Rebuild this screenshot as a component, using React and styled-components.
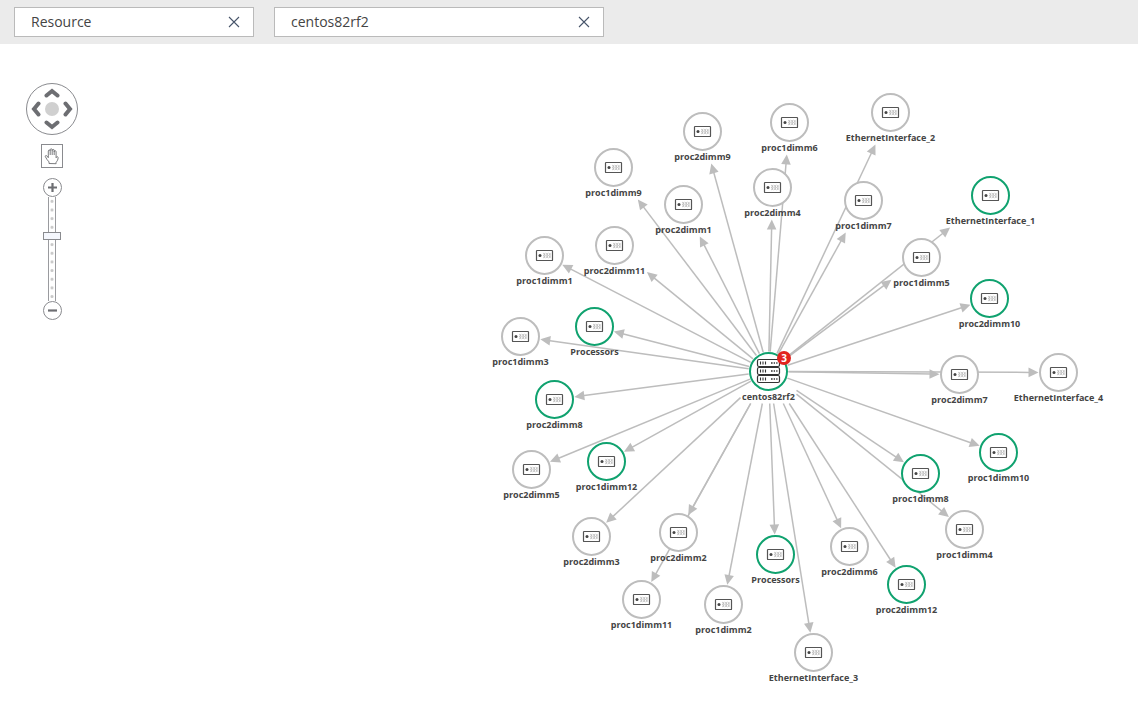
import React, { useState } from "react";
import styled, { createGlobalStyle } from "styled-components";

const GlobalStyle = createGlobalStyle`
  *, *::before, *::after { box-sizing: border-box; }
  body {
    margin: 0;
    background: #fff;
    color: #444;
    font-family: "Open Sans", "Noto Sans", sans-serif;
  }
  button, input { font-family: inherit; color: inherit; }
`;

const Page = styled.div`
  display: flex;
  flex-direction: column;
  min-height: 100vh;
`;

const FilterBar = styled.header`
  display: flex;
  gap: 20px;
  padding: 7px 14px;
  background: #ebebeb;
`;

const FilterBox = styled.div`
  display: flex;
  align-items: center;
  flex: 0 1 ${(p) => p.$width}px;
  min-width: 0;
  height: 30px;
  border: 1px solid #bababa;
  background: #fff;
`;

const FilterInput = styled.input`
  flex: 1;
  min-width: 0;
  padding: 0 16px;
  border: 0;
  outline: 0;
  background: transparent;
  font-size: 14px;
  line-height: 20px;
`;

const ClearButton = styled.button`
  display: flex;
  align-items: center;
  justify-content: center;
  flex: none;
  width: 38px;
  height: 28px;
  padding: 0;
  border: 0;
  background: transparent;
`;

const Workspace = styled.main`
  position: relative;
  flex: 1;
  overflow: hidden;
`;

const Canvas = styled.div`
  position: relative;
  height: 660px;
`;

const EdgeLayer = styled.svg`
  position: absolute;
  inset: 0;
  width: 100%;
  height: 100%;
  overflow: visible;
`;

const Node = styled.div`
  position: absolute;
  left: ${(p) => p.$x - 60}px;
  top: ${(p) => p.$y - 19}px;
  display: flex;
  flex-direction: column;
  align-items: center;
  width: 121px;
`;

const NodeDisc = styled.div`
  position: relative;
  display: flex;
  align-items: center;
  justify-content: center;
  width: 39px;
  height: 39px;
  border: 2px solid ${(p) => (p.$active ? "#10a26f" : "#bdbdbd")};
  border-radius: 50%;
  background: #fff;
`;

const NodeLabel = styled.span`
  font-size: 9px;
  font-weight: 700;
  line-height: 12px;
  white-space: nowrap;
`;

const Badge = styled.span`
  position: absolute;
  top: -3px;
  right: -5px;
  width: 14px;
  height: 14px;
  border-radius: 50%;
  background: #e2231f;
  color: #fff;
  font-size: 10px;
  font-weight: 700;
  line-height: 14px;
  text-align: center;
`;

const Controls = styled.aside`
  position: absolute;
  top: 39px;
  left: 26px;
  display: flex;
  flex-direction: column;
  align-items: center;
  width: 52px;
`;

const PanPad = styled.div`
  display: grid;
  grid-template-columns: repeat(3, 16px);
  grid-template-rows: repeat(3, 16px);
  place-content: center;
  place-items: center;
  width: 52px;
  height: 52px;
  border: 1px solid #8a8b8f;
  border-radius: 50%;
`;

const PanButton = styled.button`
  display: flex;
  grid-area: ${(p) => p.$area};
  padding: 0;
  border: 0;
  background: transparent;

  svg { transform: rotate(${(p) => p.$turn}deg); }
`;

const CenterButton = styled.button`
  grid-area: 2 / 2;
  width: 14px;
  height: 14px;
  padding: 0;
  border: 0;
  border-radius: 50%;
  background: #d0d0d0;
`;

const HandButton = styled.button`
  display: flex;
  align-items: center;
  justify-content: center;
  width: 22px;
  height: 24px;
  margin: 9px 0 10px;
  padding: 0;
  border: 1px solid #8a8b8f;
  background: #fff;
`;

const ZoomButton = styled.button`
  display: flex;
  align-items: center;
  justify-content: center;
  width: 19px;
  height: 19px;
  padding: 0;
  border: 1px solid #8a8b8f;
  border-radius: 50%;
  background: #fff;
`;

const ZoomSlider = styled.input`
  appearance: none;
  writing-mode: vertical-lr;
  direction: rtl;
  width: 18px;
  height: 104px;
  margin: 0;
  background: transparent;

  &::-webkit-slider-runnable-track {
    width: 8px;
    height: 104px;
    border: solid #9a9b9f;
    border-width: 0 1px;
    background: radial-gradient(circle, #c8c8c8 1px, transparent 2px) center top / 6px calc(100% / 12);
  }

  &::-webkit-slider-thumb {
    appearance: none;
    width: 18px;
    height: 8px;
    margin-left: -6px;
    border: 1px solid #8a8b8f;
    background: #f5f7fd;
  }
`;

const HUB = { x: 768, y: 327, label: "centos82rf2" };
const HUB_LABEL_HALF = 28;

const NODES = [
  { label: "proc2dimm9", x: 702, y: 87 },
  { label: "proc1dimm6", x: 789, y: 78 },
  { label: "EthernetInterface_2", x: 890, y: 68 },
  { label: "proc1dimm9", x: 613, y: 123 },
  { label: "proc2dimm1", x: 683, y: 160 },
  { label: "proc2dimm4", x: 772, y: 143 },
  { label: "proc1dimm7", x: 863, y: 156 },
  { label: "EthernetInterface_1", x: 990, y: 151, active: true },
  { label: "proc1dimm1", x: 544, y: 211 },
  { label: "proc2dimm11", x: 614, y: 201 },
  { label: "proc1dimm5", x: 921, y: 213 },
  { label: "proc2dimm10", x: 989, y: 254, active: true },
  { label: "proc1dimm3", x: 520, y: 292 },
  { label: "Processors", x: 594, y: 282, active: true },
  { label: "proc2dimm8", x: 554, y: 355, active: true },
  { label: "proc2dimm7", x: 959, y: 330 },
  { label: "EthernetInterface_4", x: 1058, y: 328 },
  { label: "proc2dimm5", x: 531, y: 425 },
  { label: "proc1dimm12", x: 606, y: 417, active: true },
  { label: "proc1dimm8", x: 920, y: 429, active: true },
  { label: "proc1dimm10", x: 998, y: 408, active: true },
  { label: "proc2dimm3", x: 591, y: 492 },
  { label: "proc2dimm2", x: 678, y: 488 },
  { label: "Processors", x: 775, y: 510, active: true },
  { label: "proc2dimm6", x: 849, y: 502 },
  { label: "proc1dimm4", x: 964, y: 485 },
  { label: "proc1dimm11", x: 641, y: 555 },
  { label: "proc1dimm2", x: 723, y: 560 },
  { label: "proc2dimm12", x: 906, y: 540, active: true },
  { label: "EthernetInterface_3", x: 813, y: 608 },
];

// Distance from a node's centre, along (ux, uy), at which a line clears both its disc and its label.
function clearance(half, ux, uy) {
  const radius = 20;
  if (uy <= 0) return radius;
  const toSide = ux === 0 ? Infinity : half / Math.abs(ux);
  const exit = Math.min(toSide, 32 / uy);
  return exit * uy > 18 ? Math.max(radius, exit) : radius;
}

function Edge({ to }) {
  const dx = to.x - HUB.x;
  const dy = to.y - HUB.y;
  const len = Math.hypot(dx, dy);
  const ux = dx / len;
  const uy = dy / len;
  const start = clearance(HUB_LABEL_HALF, ux, uy);
  const end = len - clearance(to.label.length * 2.4 + 6, -ux, -uy);
  const at = (d, side = 0) => [HUB.x + 0.5 + ux * d - uy * side, HUB.y + 0.5 + uy * d + ux * side];
  const [x1, y1] = at(start);
  const [x2, y2] = at(end - 8);
  return (
    <g>
      <line x1={x1} y1={y1} x2={x2} y2={y2} stroke="#bdbdbd" strokeWidth="1.5" />
      <polygon points={[at(end), at(end - 10, 4.8), at(end - 10, -4.8)].join(" ")} fill="#bdbdbd" />
    </g>
  );
}

function DeviceIcon() {
  return (
    <svg width="19" height="13" viewBox="0 0 19 13" fill="none" aria-hidden="true">
      <rect x="1.5" y="1.5" width="16" height="10" rx=".6" stroke="#555" strokeWidth="1.2" />
      <circle cx="5" cy="6.5" r="1.5" fill="#444" />
      <path
        d="M8 4l1.7 1.3L8 6.5l1.7 1.3L8 9M10.7 4l1.7 1.3-1.7 1.2 1.7 1.3L10.7 9M13.4 4l1.7 1.3-1.7 1.2 1.7 1.3L13.4 9M9.7 4v5M12.4 4v5M15.1 4v5"
        stroke="#aaa"
        strokeWidth=".6"
      />
    </svg>
  );
}

function ServerIcon() {
  return (
    <svg width="25" height="27" viewBox="0 0 25 27" fill="none" stroke="#333" aria-hidden="true">
      {[1.5, 9.5, 17.5].map((y) => (
        <g key={y}>
          <rect x="1.5" y={y} width="22" height="7" rx="1.5" strokeWidth="1.2" />
          <path d={`M4.5 ${y + 2}v3M7 ${y + 2}v3M9.5 ${y + 2}v3`} strokeWidth="1.1" />
          <path d={`M15 ${y + 3.5}h1.6M17.7 ${y + 3.5}h1.3M20.2 ${y + 3.5}h1.3`} strokeWidth="1.3" />
        </g>
      ))}
    </svg>
  );
}

function Chevron() {
  return (
    <svg width="16" height="10" viewBox="0 0 16 10" fill="none" aria-hidden="true">
      <path d="M2.5 7.5L8 3l5.5 4.5" stroke="#6d6e72" strokeWidth="4" strokeLinecap="round" />
    </svg>
  );
}

function Filter({ name, initial, width }) {
  const [value, setValue] = useState(initial);
  return (
    <FilterBox $width={width}>
      <FilterInput aria-label={name} value={value} onChange={(e) => setValue(e.target.value)} />
      <ClearButton aria-label={`Clear ${name}`} onClick={() => setValue("")}>
        <svg width="12" height="12" viewBox="0 0 12 12" aria-hidden="true">
          <path d="M1 1l10 10M11 1L1 11" stroke="#48556a" strokeWidth="1.1" />
        </svg>
      </ClearButton>
    </FilterBox>
  );
}

export default function App() {
  const [zoom, setZoom] = useState(64);
  return (
    <Page>
      <GlobalStyle />
      <FilterBar>
        <Filter name="Category" initial="Resource" width={240} />
        <Filter name="Resource name" initial="centos82rf2" width={330} />
      </FilterBar>
      <Workspace>
        <Canvas>
          <EdgeLayer aria-hidden="true">
            {NODES.map((n) => (
              <Edge key={`${n.x}-${n.y}`} to={n} />
            ))}
          </EdgeLayer>
          {NODES.map((n) => (
            <Node key={`${n.x}-${n.y}`} $x={n.x} $y={n.y}>
              <NodeDisc $active={n.active}>
                <DeviceIcon />
              </NodeDisc>
              <NodeLabel>{n.label}</NodeLabel>
            </Node>
          ))}
          <Node $x={HUB.x} $y={HUB.y}>
            <NodeDisc $active>
              <ServerIcon />
              <Badge>3</Badge>
            </NodeDisc>
            <NodeLabel>{HUB.label}</NodeLabel>
          </Node>
        </Canvas>
        <Controls>
          <PanPad>
            <PanButton aria-label="Pan up" $area="1 / 2" $turn={0}><Chevron /></PanButton>
            <PanButton aria-label="Pan left" $area="2 / 1" $turn={-90}><Chevron /></PanButton>
            <CenterButton aria-label="Center" />
            <PanButton aria-label="Pan right" $area="2 / 3" $turn={90}><Chevron /></PanButton>
            <PanButton aria-label="Pan down" $area="3 / 2" $turn={180}><Chevron /></PanButton>
          </PanPad>
          <HandButton aria-label="Drag">
            <svg width="16" height="18" viewBox="0 0 16 18" fill="none" aria-hidden="true">
              <path
                d="M5 16.5v-1.6C3.6 13.6 2.3 11.6 1.3 9.6c-.4-.9.9-1.6 1.6-.7l1.4 1.8V4c0-1.3 1.9-1.3 1.9 0v-1.2c0-1.4 2-1.4 2 0v.6c0-1.3 2-1.3 2 0v1.2c0-1.2 1.9-1.2 1.9 0v6.2c.4-1.4 2-1.6 2-.2 0 2-.8 3.4-2 4.6v1.5zM6.2 4v4M8.2 3v5M10.2 3.6V8"
                stroke="#6d6e72"
                strokeWidth=".9"
                strokeLinejoin="round"
              />
            </svg>
          </HandButton>
          <ZoomButton aria-label="Zoom in" onClick={() => setZoom(Math.min(100, zoom + 10))}>
            <svg width="11" height="11" viewBox="0 0 11 11" aria-hidden="true">
              <path d="M5.5 1v9M1 5.5h9" stroke="#6d6e72" strokeWidth="2.2" />
            </svg>
          </ZoomButton>
          <ZoomSlider
            type="range"
            aria-label="Zoom level"
            min="0"
            max="100"
            value={zoom}
            onChange={(e) => setZoom(Number(e.target.value))}
          />
          <ZoomButton aria-label="Zoom out" onClick={() => setZoom(Math.max(0, zoom - 10))}>
            <svg width="11" height="11" viewBox="0 0 11 11" aria-hidden="true">
              <path d="M1 5.5h9" stroke="#6d6e72" strokeWidth="2.2" />
            </svg>
          </ZoomButton>
        </Controls>
      </Workspace>
    </Page>
  );
}
